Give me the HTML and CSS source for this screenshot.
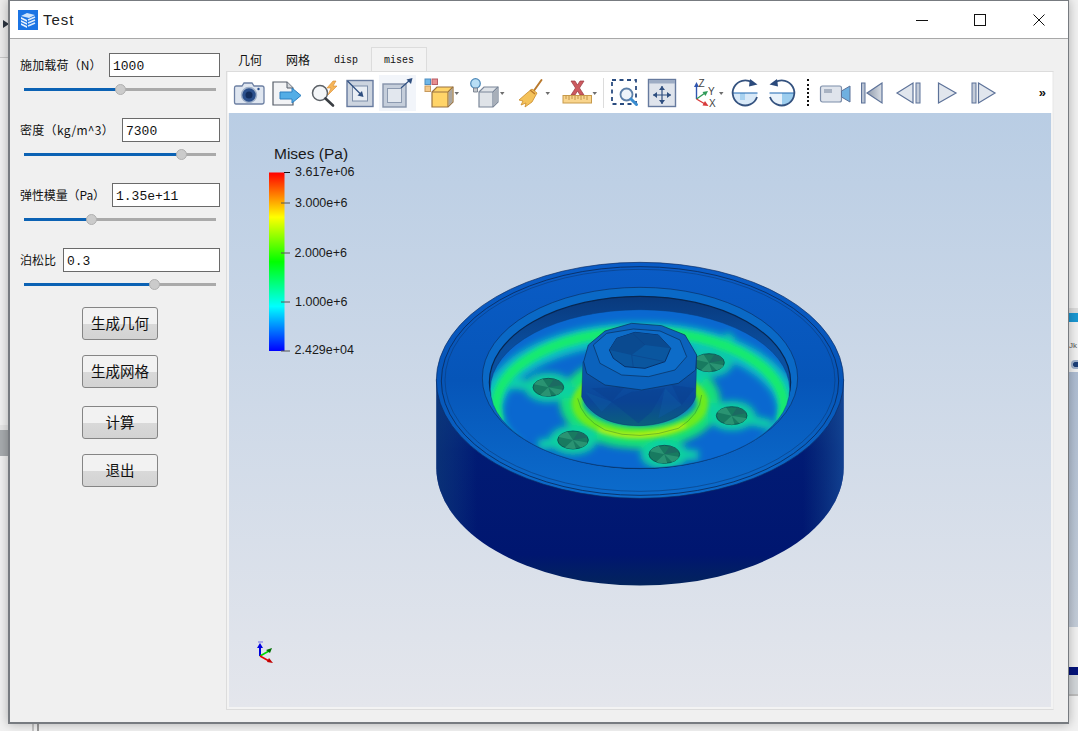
FILE: index.html
```html
<!DOCTYPE html>
<html lang="zh">
<head>
<meta charset="utf-8">
<title>Test</title>
<link rel="stylesheet" href="styles.css">
</head>
<body>
<div class="desktop">
  <div class="bg-left-top"><span class="bg-arrow"></span></div>
  <div class="bg-left-band"></div>
  <div class="bg-bottom-a"></div>
  <div class="bg-bottom-b"></div>
  <div class="bg-right-band"></div>
  <div class="bg-right-text">Jk</div>
  <div class="bg-right-dot"></div>
  <div class="bg-right-panel"></div>
  <div class="bg-right-navy"></div>
  <div class="bg-right-foot"></div>

  <div class="window">
    <header class="titlebar">
      <svg class="app-icon" viewBox="0 0 20 20" width="20" height="20">
        <rect width="20" height="20" fill="#1b74e4"/>
        <path d="M3 6 9 3 17 5 11 8Z" fill="#cfe4fb"/>
        <path d="M3 7 9 10V18L3 15Z" fill="#e7f1fd"/>
        <path d="M3 9.5 9 12.5M3 12.5 9 15.5" stroke="#1b74e4" stroke-width="1.1"/>
        <path d="M10 10 17 7M10 13 17 10M10 16 17 13" stroke="#dcebfc" stroke-width="1.6"/>
      </svg>
      <span class="title">Test</span>
      <div class="win-controls">
        <span class="win-btn"><svg viewBox="0 0 12 12" width="12" height="12"><path d="M0 6.5H12" stroke="#111" stroke-width="1"/></svg></span>
        <span class="win-btn"><svg viewBox="0 0 12 12" width="12" height="12"><rect x=".5" y=".5" width="11" height="11" fill="none" stroke="#111"/></svg></span>
        <span class="win-btn"><svg viewBox="0 0 12 12" width="12" height="12"><path d="M.5.5 11.5 11.5M11.5.5.5 11.5" stroke="#111"/></svg></span>
      </div>
    </header>

    <div class="content">
      <aside class="panel">
        <div class="field">
          <div class="field-row"><label class="lbl lbl-a">施加载荷（N）</label><input class="num" value="1000"></div>
          <div class="slider"><div class="fill" style="width:50.5%"></div><div class="knob" style="left:50.5%"></div></div>
        </div>
        <div class="field">
          <div class="field-row"><label class="lbl lbl-b">密度（kg/m^3）</label><input class="num" value="7300"></div>
          <div class="slider"><div class="fill" style="width:82%"></div><div class="knob" style="left:82%"></div></div>
        </div>
        <div class="field">
          <div class="field-row"><label class="lbl lbl-c">弹性模量（Pa）</label><input class="num" value="1.35e+11"></div>
          <div class="slider"><div class="fill" style="width:35%"></div><div class="knob" style="left:35%"></div></div>
        </div>
        <div class="field field-last">
          <div class="field-row"><label class="lbl lbl-d">泊松比</label><input class="num" value="0.3"></div>
          <div class="slider"><div class="fill" style="width:68%"></div><div class="knob" style="left:68%"></div></div>
        </div>
        <div class="actions">
          <button class="btn">生成几何</button>
          <button class="btn">生成网格</button>
          <button class="btn btn-gap">计算</button>
          <button class="btn">退出</button>
        </div>
      </aside>

      <main class="workspace">
        <nav class="tabs">
          <span class="tab">几何</span>
          <span class="tab">网格</span>
          <span class="tab tab-mono">disp</span>
          <span class="tab tab-mono tab-active">mises</span>
        </nav>
        <div class="pane">
          <div class="toolbar">
            <!-- camera -->
            <svg class="tool" width="37" height="36" viewBox="0 0 37 36"><path d="M5 11H11L13 8H21L23 11H31Q33 11 33 13V27Q33 29 31 29H5Q3.5 29 3.5 27V13Q3.500 11 5 11Z" fill="#dfe6f0" stroke="#6d80a3" stroke-width="1.3"/><circle cx="18" cy="20" r="7.500" fill="#2a4f8c" stroke="#9fb0c9" stroke-width="1.500"/><circle cx="18" cy="20" r="3.500" fill="#112c5c"/><circle cx="27.500" cy="14" r="1.200" fill="#2a4f8c"/></svg>
            <!-- export doc -->
            <svg class="tool" width="37" height="36" viewBox="0 0 37 36"><path d="M5 7H19L25 13V30H5Z" fill="#f2f3f5" stroke="#555d68" stroke-width="1.200"/><path d="M19 7V13H25" fill="#d5d8dc" stroke="#555d68"/><path d="M12 17H24V13L33 20.500 24 28V24H12Z" fill="#53ade6" stroke="#2c7fc0"/></svg>
            <!-- zoom flash -->
            <svg class="tool" width="37" height="36" viewBox="0 0 37 36"><circle cx="15" cy="18" r="7.500" fill="#f4f6f8" stroke="#5c6167" stroke-width="1.500"/><path d="M20.500 23.500 28 30.500" stroke="#3a3e43" stroke-width="2.600" stroke-linecap="round"/><path d="M28 6 22 13H26L23 20 32 11H28L31 6Z" fill="#f6b558" stroke="#d58a32" stroke-width=".6"/></svg>
            <!-- box in -->
            <svg class="tool" width="37" height="36" viewBox="0 0 37 36"><rect x="5" y="5.500" width="26" height="26" fill="#ccd4df" stroke="#667a9e" stroke-width="1.400"/><rect x="10.500" y="11" width="15" height="15" fill="#e9eef4" stroke="#7d8ea9"/><path d="M5.500 6 19 19.500" stroke="#2f4f80" stroke-width="1.200"/><path d="M21.500 22 15.500 20.500 20 16Z" fill="#2f4f80"/></svg>
            <!-- box out -->
            <svg class="tool tool-hi" width="37" height="36" viewBox="0 0 37 36"><rect x="4" y="9" width="23" height="23" fill="#c5cedb" stroke="#8593aa" stroke-width="1.400"/><rect x="8.500" y="13.500" width="14" height="14" fill="#e2e7ee" stroke="#8c9ab0"/><path d="M22 13 31 5" stroke="#2f4f80" stroke-width="1.200"/><path d="M33.500 3 32 9 27.500 4.500Z" fill="#2f4f80"/></svg>
            <!-- colour cube -->
            <svg class="tool" width="44" height="36" viewBox="0 0 44 36"><rect x="9" y="4" width="5.500" height="5.500" fill="#6fb7e8" stroke="#4f8dc0"/><rect x="16" y="4" width="5.500" height="5.500" fill="#e88f8f" stroke="#b85f68"/><rect x="9" y="11" width="5.500" height="5.500" fill="#f5c98a" stroke="#c79a5c"/><path d="M16 17 21 12H37V27L32 32H16Z" fill="#ffd468" stroke="#9a7342" stroke-width="1.200"/><path d="M16 17H32V32M32 17 37 12" fill="none" stroke="#9a7342" stroke-width="1.200"/><path d="M32.500 17.500 36.500 13V27L32.500 31Z" fill="#a9a5a0"/><path d="M38.500 17H43L40.700 20Z" fill="#6d6d6d"/></svg>
            <!-- bulb cube -->
            <svg class="tool" width="48" height="36" viewBox="0 0 48 36"><circle cx="15.500" cy="8.500" r="4.800" fill="#b8def5" stroke="#4d88b8" stroke-width="1.200"/><path d="M13.500 13H17.500V17H13.500Z" fill="#c6c9cd" stroke="#6a7383" stroke-width=".8"/><path d="M19 17 24 12H38V27L33 32H19Z" fill="#dfe3e8" stroke="#7a8698" stroke-width="1.200"/><path d="M19 17H33V32M33 17 38 12" fill="none" stroke="#7a8698" stroke-width="1.200"/><path d="M33.500 17.500 37.500 13V27L33.500 31Z" fill="#a8afb9"/><path d="M40 17H44.500L42.200 20Z" fill="#6d6d6d"/></svg>
            <!-- broom -->
            <svg class="tool" width="47" height="36" viewBox="0 0 47 36"><path d="M33.500 5 25 17" stroke="#b9792d" stroke-width="2" stroke-linecap="round"/><path d="M24 14 29 18 24 27 17 32 18 28 13 30 15 26 11 25 19 18Z" fill="#f4c25a" stroke="#c98a2a" stroke-width=".8"/><path d="M22 15 27 19" stroke="#b9792d" stroke-width="1.500"/><path d="M37.500 17H42L39.700 20Z" fill="#6d6d6d"/></svg>
            <!-- ruler x -->
            <svg class="tool" width="43" height="36" viewBox="0 0 43 36"><path d="M16 6 20 6 22.500 10 25 6 29 6 24.500 13 29 20H25L22.500 16 20 20H16L20.500 13Z" fill="#cd5a5f" stroke="#9a3b42" stroke-width=".7"/><rect x="8" y="20.500" width="28.500" height="7.500" fill="#f9d58d" stroke="#c79a4b"/><path d="M11 21V24M14 21V25M17 21V24M20 21V25M23 21V24M26 21V25M29 21V24M32 21V25" stroke="#b5863b" stroke-width=".8"/><path d="M37.500 17H42L39.700 20Z" fill="#6d6d6d"/></svg>
            <span class="tool-sep"></span>
            <!-- zoom dash -->
            <svg class="tool" width="37" height="36" viewBox="0 0 37 36"><rect x="5" y="5" width="24" height="24" fill="none" stroke="#2a4c80" stroke-width="1.800" stroke-dasharray="4 3.500"/><circle cx="19.500" cy="19.500" r="6" fill="#eef4fa" stroke="#5c7fa8" stroke-width="1.800"/><path d="M24 24 29.500 29.500" stroke="#3a8dd0" stroke-width="3" stroke-linecap="round"/></svg>
            <!-- pan -->
            <svg class="tool" width="37" height="36" viewBox="0 0 37 36"><rect x="4.500" y="4.500" width="27" height="27" fill="#dfe4ec" stroke="#667a9e" stroke-width="1.400"/><rect x="5" y="5" width="26" height="3.500" fill="#9dacc4"/><path d="M18 11V29M9 20H27" stroke="#2f4f80" stroke-width="1.200"/><path d="M18 11 21 15H15ZM18 29 15 25H21ZM9 20 13 17V23ZM27 20 23 17V23Z" fill="#2f4f80"/></svg>
            <!-- axes -->
            <svg class="tool" width="45" height="36" viewBox="0 0 45 36"><path d="M15.500 24V11" stroke="#2f55b0" stroke-width="1.400"/><path d="M15.500 7 18 12H13Z" fill="#2f55b0"/><path d="M15.500 24 24 18" stroke="#2f9b58" stroke-width="1.400"/><path d="M27 16 24.500 21 21.500 17Z" fill="#2f9b58"/><path d="M15.500 24 24 29" stroke="#d83a3a" stroke-width="1.400"/><path d="M27.500 31 21.500 30.500 24 26Z" fill="#d83a3a"/><text x="17.500" y="12" class="axis-letter">Z</text><text x="27" y="20" class="axis-letter">Y</text><text x="28" y="32" class="axis-letter">X</text><path d="M38 17H42.500L40.200 20Z" fill="#6d6d6d"/></svg>
            <!-- rotate cw -->
            <svg class="tool" width="37" height="36" viewBox="0 0 37 36"><path d="M6.500 18A12.500 12.500 0 0 0 31.500 18Z" fill="#d8e9f8"/><path d="M14 18H19V25H14Z" fill="#a8d2f0"/><path d="M6.500 18H31.500" stroke="#2f74b8" stroke-width="1.100"/><path d="M26 7.500A12.500 12.500 0 1 0 31 22" fill="none" stroke="#34527f" stroke-width="1.800"/><path d="M24 4 31.500 9.500 23 11.500Z" fill="#2b4a7c"/></svg>
            <!-- rotate ccw -->
            <svg class="tool" width="37" height="36" viewBox="0 0 37 36"><path d="M6.500 18A12.500 12.500 0 0 0 31.500 18Z" fill="#e8f2fb"/><path d="M19 18H31.500A12.500 12.500 0 0 1 19 30.500Z" fill="#9ccdee"/><path d="M6.500 18H31.500" stroke="#2f74b8" stroke-width="1.100"/><path d="M12 7.500A12.500 12.500 0 1 1 7 22" fill="none" stroke="#34527f" stroke-width="1.800"/><path d="M14 4 6.500 9.500 15 11.500Z" fill="#2b4a7c"/></svg>
            <span class="tool-dots"></span>
            <!-- video -->
            <svg class="tool" width="37" height="36" viewBox="0 0 37 36"><rect x="4.500" y="11" width="21" height="16" rx="2" fill="#dfe4ec" stroke="#7d8ea9" stroke-width="1.200"/><rect x="8" y="14" width="8" height="4" fill="#a9b3c3"/><path d="M25.500 16 34 11V27L25.500 22Z" fill="#6fb0e0" stroke="#5d7299"/></svg>
            <!-- first -->
            <svg class="tool" width="37" height="36" viewBox="0 0 37 36"><rect x="8.500" y="8" width="3.500" height="20" fill="#b8c2d2" stroke="#5d7299"/><path d="M29 8 14 18 29 28Z" fill="url(#grayFill)" stroke="#5d7299" stroke-width="1.200"/></svg>
            <!-- prev -->
            <svg class="tool" width="37" height="36" viewBox="0 0 37 36"><path d="M7 18 23 8V28Z" fill="#e1e6ed" stroke="#5d7299" stroke-width="1.200"/><rect x="26" y="8" width="4" height="20" fill="#c3cbd8" stroke="#5d7299"/></svg>
            <!-- play -->
            <svg class="tool" width="37" height="36" viewBox="0 0 37 36"><path d="M11.500 8 29 18 11.500 28Z" fill="#e1e6ed" stroke="#5d7299" stroke-width="1.200"/></svg>
            <!-- last -->
            <svg class="tool" width="37" height="36" viewBox="0 0 37 36"><rect x="8" y="8" width="4" height="20" fill="#c3cbd8" stroke="#5d7299"/><path d="M14.500 8 31 18 14.500 28Z" fill="#e1e6ed" stroke="#5d7299" stroke-width="1.200"/></svg>
            <span class="tool-more">»</span>
          </div>

          <div class="viewport">
            <svg class="scene" viewBox="229 113 822 594" width="822" height="594">
              <defs>
                <linearGradient id="grayFill" x1="0" y1="0" x2="1" y2="0"><stop offset="0" stop-color="#8e99ab"/><stop offset="1" stop-color="#d9dee5"/></linearGradient>
                <linearGradient id="legend" x1="0" y1="0" x2="0" y2="1">
                  <stop offset="0" stop-color="#ff0000"/><stop offset=".25" stop-color="#ffff00"/><stop offset=".5" stop-color="#00ff00"/><stop offset=".75" stop-color="#00ffff"/><stop offset="1" stop-color="#0000ff"/>
                </linearGradient>
                <linearGradient id="side" x1="0" y1="0" x2="0" y2="1">
                  <stop offset="0" stop-color="#072f80"/><stop offset=".35" stop-color="#011b74"/><stop offset=".85" stop-color="#001670"/><stop offset="1" stop-color="#03245c"/>
                </linearGradient>
                <linearGradient id="sideEdge" x1="0" y1="0" x2="1" y2="0">
                  <stop offset="0" stop-color="#0f3f78" stop-opacity=".6"/><stop offset=".1" stop-color="#134a86" stop-opacity="0"/><stop offset=".9" stop-color="#134a86" stop-opacity="0"/><stop offset="1" stop-color="#1a55a0" stop-opacity=".65"/>
                </linearGradient>
                <linearGradient id="topFace" x1="0" y1="0" x2="0" y2="1">
                  <stop offset="0" stop-color="#0a5cc6"/><stop offset=".5" stop-color="#0655b8"/><stop offset="1" stop-color="#0c6ccc"/>
                </linearGradient>
                <linearGradient id="wall" x1="0" y1="0" x2="0" y2="1">
                  <stop offset="0" stop-color="#09397c"/><stop offset=".3" stop-color="#0a4e9e"/><stop offset="1" stop-color="#0b5fb4"/>
                </linearGradient>
                <linearGradient id="hubSide" x1="0" y1="0" x2="0" y2="1">
                  <stop offset="0" stop-color="#0b5bb2"/><stop offset=".65" stop-color="#0b4698"/><stop offset="1" stop-color="#0b5f7c"/>
                </linearGradient>
                <clipPath id="floorClip"><ellipse cx="645" cy="402" rx="449" ry="238"/></clipPath>
                <clipPath id="holeClip"><ellipse cx="0" cy="0" rx="46" ry="27"/></clipPath>
                <filter id="soft" x="-20%" y="-20%" width="140%" height="140%"><feGaussianBlur stdDeviation="11"/></filter>
                <filter id="softer" x="-20%" y="-20%" width="140%" height="140%"><feGaussianBlur stdDeviation="6"/></filter>
                <g id="hole">
                  <ellipse rx="46" ry="27" fill="#187a60" stroke="#0b4a50" stroke-width="2.500"/>
                  <g clip-path="url(#holeClip)">
                    <path d="M0 0-46-10-20-30ZM0 0 46 8 30 30ZM0 0-30 28 10 30Z" fill="#2a9372"/>
                    <path d="M0 0 20-30 46-8Z" fill="#1c6a62"/>
                  </g>
                </g>
              </defs>

              <!-- scalar bar -->
              <text x="274" y="159" class="legend-title">Mises (Pa)</text>
              <rect x="269" y="172.500" width="15.500" height="178.500" fill="url(#legend)"/>
              <path d="M284 172.500H290" stroke="#111" stroke-width="1"/>
              <path d="M281 203H290M281 253H290M281 302H290M281 351H290" stroke="#555" stroke-width="1"/>
              <text x="295" y="176" class="legend-label">3.617e+06</text>
              <text x="295" y="207" class="legend-label">3.000e+6</text>
              <text x="294.500" y="257" class="legend-label">2.000e+6</text>
              <text x="295" y="306" class="legend-label">1.000e+6</text>
              <text x="294.500" y="354" class="legend-label">2.429e+04</text>

              <!-- axes triad -->
              <path d="M260 656V647" stroke="#0000e0" stroke-width="2"/>
              <path d="M260 643 263 648H257Z" fill="#0000e0"/>
              <path d="M258 642H263" stroke="#a9a9e8" stroke-width="2"/>
              <path d="M260 656 269 651" stroke="#00d800" stroke-width="1.600"/>
              <path d="M272 648 270 653 266 650Z" fill="#007000"/>
              <path d="M260 656 269 661" stroke="#e80000" stroke-width="1.600"/>
              <path d="M273 663 267 662 269 658Z" fill="#c00000"/>

              <!-- model, drawn in a 3x working grid -->
              <g transform="translate(425 255) scale(.33333)">
                <path d="M34 372V638A611 354 0 0 0 1256 638V372Z" fill="url(#side)"/>
                <path d="M34 372V638A611 354 0 0 0 1256 638V372Z" fill="url(#sideEdge)"/>
                <ellipse cx="645" cy="376" rx="611" ry="354" fill="url(#topFace)" stroke="#0a2a60" stroke-width="2"/>
                <ellipse cx="645" cy="378" rx="596" ry="343" fill="none" stroke="#0a2a5c" stroke-width="2.500"/>
                <ellipse cx="645" cy="376" rx="585" ry="333" fill="none" stroke="#0a3a78" stroke-width="1.800"/>
                <ellipse cx="645" cy="369" rx="473" ry="272" fill="#0a69c6" stroke="#0b2f60" stroke-width="2"/>
                <ellipse cx="645" cy="382" rx="452" ry="258" fill="url(#wall)" stroke="#072650" stroke-width="3.500"/>

                <g clip-path="url(#floorClip)">
                  <rect x="190" y="160" width="910" height="490" fill="#0a68d0"/>
                  <g filter="url(#soft)">
                    <path d="M270 590A445 230 0 1 1 1020 590" fill="none" stroke="#0cc4c0" stroke-width="66"/>
                    <ellipse cx="645" cy="440" rx="205" ry="105" fill="none" stroke="#14e078" stroke-width="72"/>
                    <path d="M480 420 370 397 240 385M800 400 852 323 920 240M830 450 920 482 1040 510M520 510 444 555 340 570M700 540 718 598 820 600" fill="none" stroke="#0cd0a8" stroke-width="30"/>
                    <ellipse cx="370" cy="397" rx="72" ry="44" fill="#10d0a0"/>
                    <ellipse cx="852" cy="323" rx="72" ry="44" fill="#10c8a8"/>
                    <ellipse cx="920" cy="482" rx="72" ry="44" fill="#10d0a0"/>
                    <ellipse cx="444" cy="555" rx="72" ry="44" fill="#10d0a0"/>
                    <ellipse cx="718" cy="598" rx="72" ry="44" fill="#10d0a0"/>
                  </g>
                  <g filter="url(#softer)">
                    <path d="M222 500A432 225 0 1 1 1068 500" fill="none" stroke="#18ea70" stroke-width="30"/>
                    <ellipse cx="645" cy="445" rx="190" ry="92" fill="none" stroke="#6eea1c" stroke-width="30"/>
                    <path d="M520 525Q640 565 780 510" fill="none" stroke="#c8f218" stroke-width="10"/>
                  </g>
                  <use href="#hole" x="370" y="397"/>
                  <use href="#hole" x="852" y="323"/>
                  <use href="#hole" x="920" y="482"/>
                  <use href="#hole" x="444" y="555"/>
                  <use href="#hole" x="718" y="598"/>
                  <path d="M458 430Q470 490 540 525 640 560 760 520 825 480 830 420" fill="none" stroke="#0a5a3a" stroke-width="1.800" stroke-opacity=".55"/>
                </g>
                <ellipse cx="645" cy="402" rx="449" ry="238" fill="none" stroke="#0a3f80" stroke-width="1.500"/>

                <!-- hub -->
                <path d="M474 320 470 425C490 480 560 512 640 512 730 512 800 470 812 425L815 300Z" fill="url(#hubSide)" stroke="#0a3a6a" stroke-width="1.500"/>
                <path d="M500 400 560 440 600 395ZM620 410 680 470 720 400ZM560 440 640 505 680 470 620 410ZM740 390 770 450 810 400Z" fill="#083f8e" fill-opacity=".45"/>
                <path d="M480 410 530 470 560 440ZM700 490 770 450 720 400Z" fill="#0e5ca4" fill-opacity=".4"/>
                <polygon points="476,320 490,270 540,228 620,205 710,212 780,240 815,300 812,345 760,385 650,405 540,390 485,355" fill="#0b62bc" stroke="#0a3260" stroke-width="2.200"/>
                <polygon points="505,270 545,235 625,222 705,228 765,255 785,305 750,345 670,365 590,360 525,325" fill="#0d6cc8" stroke="#0a3260" stroke-width="2.200"/>
                <polygon points="553,285 575,250 630,232 700,240 737,280 720,320 660,340 600,335 565,310" fill="#0a569f" stroke="#07285a" stroke-width="2.500"/>
                <path d="M553 285 575 250 630 232 700 240 737 280 660 270 620 300Z" fill="#0a4a90"/>
                <path d="M620 300 625 338M620 300 720 320M660 270 620 232" stroke="#0a3f85" stroke-width="1.500" fill="none"/>
              </g>
            </svg>
          </div>
        </div>
      </main>
    </div>
  </div>
</div>
</body>
</html>
```

FILE: styles.css
```css
* { box-sizing: border-box; }
html, body { margin: 0; padding: 0; }
body { background: #e6e6e6; }

.desktop {
  position: relative;
  width: 1078px;
  height: 731px;
  overflow: hidden;
  background: #f1f1f1;
  font-family: "Noto Sans CJK SC", "Liberation Sans", sans-serif;
}

/* Things behind the window on the desktop */
.bg-left-top { position: absolute; left: 0; top: 0; width: 8px; height: 58px; background: #ececec; border-bottom: 1px solid #c8c8c8; }
.bg-arrow { position: absolute; left: 3px; top: 20px; border-left: 6px solid #2b3440; border-top: 4px solid transparent; border-bottom: 4px solid transparent; }
.bg-left-band { position: absolute; left: 0; top: 425px; width: 8px; height: 31px; background: #a7abae; border-top: 5px solid #e6e6e6; }
.bg-bottom-a { position: absolute; left: 32px; top: 723px; width: 2px; height: 8px; background: #c4c4c4; }
.bg-bottom-b { position: absolute; left: 37px; top: 723px; width: 2px; height: 8px; background: #9a9a9a; }
.bg-right-band { position: absolute; left: 1069px; top: 308px; width: 9px; height: 14px; background: #1a97d2; border-top: 5px solid #dcdcdc; }
.bg-right-text { position: absolute; left: 1069px; top: 341px; font: 8px "Liberation Sans", sans-serif; color: #555; }
.bg-right-dot { position: absolute; left: 1071px; top: 360px; width: 7px; height: 9px; border-radius: 4px 0 0 4px; background: #1c3f78; border: 2px solid #9fb0c9; border-right: 0; }
.bg-right-panel { position: absolute; left: 1069px; top: 372px; width: 9px; height: 255px; background: linear-gradient(#aebdd2, #c3ccd8); }
.bg-right-navy { position: absolute; left: 1069px; top: 667px; width: 9px; height: 8px; background: #03127a; }
.bg-right-foot { position: absolute; left: 1069px; top: 675px; width: 9px; height: 21px; background: #d2d6d9; border-bottom: 2px solid #bdbdbd; }

/* Window */
.window {
  position: absolute;
  left: 8px;
  top: 0;
  width: 1061px;
  height: 724px;
  display: flex;
  flex-direction: column;
  background: #f0f0f0;
  border: 1px solid #777b80;
  border-left-width: 2px;
  border-bottom-width: 2px;
  box-shadow: 0 0 10px rgba(0, 0, 0, .28);
}

.titlebar {
  height: 38px;
  flex: none;
  display: flex;
  align-items: center;
  background: #fff;
  border-bottom: 1px solid #a8a8a8;
  padding-left: 8px;
}
.app-icon { flex: none; }
.title {
  margin-left: 5px;
  font: 15px "Liberation Sans", sans-serif;
  letter-spacing: 1px;
  color: #222;
}
.win-controls { margin-left: auto; display: flex; }
.win-btn { width: 58.500px; height: 37px; display: flex; align-items: center; justify-content: center; }

.content { flex: 1; display: flex; min-height: 0; }

/* Left panel */
.panel { width: 216px; flex: none; padding: 14px 6px 0 10px; }
.field { height: 54px; margin-bottom: 11px; }
.field-last { margin-bottom: 0; }
.field-row { display: flex; align-items: center; height: 24px; }
.lbl { flex: none; font-size: 12px; line-height: 24px; color: #111; white-space: nowrap; }
.lbl-a { width: 89px; letter-spacing: .15px; }
.lbl-b { width: 102px; letter-spacing: .3px; }
.lbl-c { width: 92px; letter-spacing: -.1px; }
.lbl-d { width: 43px; }
.num {
  flex: 1;
  min-width: 0;
  height: 24px;
  padding: 2px 3px 0;
  border: 1px solid #6a6a6a;
  border-radius: 0;
  background: #fff;
  color: #111;
  font: 13px "Liberation Mono", monospace;
  outline: none;
}
.slider { position: relative; margin: 11px 0 0 4px; width: 192px; height: 2.500px; background: #aaa; }
.fill { height: 100%; background: #0b62b4; }
.knob {
  position: absolute;
  top: -4.500px;
  width: 11px;
  height: 11px;
  margin-left: -5.500px;
  border-radius: 50%;
  background: #cbcbcb;
  border: 1px solid #b0b0b0;
}
.actions { display: flex; flex-direction: column; align-items: center; gap: 15px; margin-top: 5px; }
.btn {
  width: 76px;
  height: 33px;
  padding: 0;
  border: 1px solid #858585;
  border-radius: 3px;
  background: linear-gradient(#f2f2f2 50%, #d9d9d9 50%, #d3d3d3);
  color: #111;
  font: 14.500px "Noto Sans CJK SC", sans-serif;
  line-height: 1;
}
.btn-gap { margin-top: 3px; }

/* Right side */
.workspace { flex: 1; min-width: 0; display: flex; flex-direction: column; padding: 8px 14px 12px 0; }
.tabs { display: flex; height: 24px; flex: none; }
.tab { padding: 0 12px; font-size: 12px; line-height: 26px; color: #111; }
.tab-mono { font: 10px/27px "Liberation Mono", monospace; }
.tab-active { margin-left: 1px; padding: 0 12px; background: #f3f3f3; border: 1px solid #dcdcdc; border-bottom: 0; line-height: 26px; }

.pane {
  flex: 1;
  min-height: 0;
  display: flex;
  flex-direction: column;
  border: 1px solid #dcdcdc;
  border-right-color: #ebebeb;
  padding: 0 1px 2px;
  background: #f3f3f3;
}
.toolbar { height: 41px; flex: none; display: flex; align-items: flex-start; padding: 3px 0 0 3px; background: #fff; }
.tool { display: block; flex: none; }
.tool-hi { background: #f2f5fa; }
.tool-sep { flex: none; width: 9px; height: 36px; position: relative; }
.tool-sep::before { content: ""; position: absolute; left: 5px; top: 3px; width: 1px; height: 30px; background: #dcdcdc; }
.tool-dots { flex: none; width: 16px; height: 36px; position: relative; }
.tool-dots::before { content: ""; position: absolute; left: 7px; top: 4px; height: 27px; border-left: 2px dotted #111; }
.tool-more { margin-left: auto; margin-right: 6px; font: bold 13px/36px "Liberation Sans", sans-serif; color: #111; }
.axis-letter { font: 10px "Liberation Sans", sans-serif; fill: #444; }

.viewport {
  flex: 1;
  min-height: 0;
  margin-left: 1px;
  margin-right: 1px;
  background: linear-gradient(#b9cde4, #e4e6ec);
  overflow: hidden;
}
.scene { display: block; }
.legend-title { font: 15.500px "Liberation Sans", sans-serif; fill: #1a1a1a; }
.legend-label { font: 12.500px "Liberation Sans", sans-serif; fill: #1a1a1a; }
```
